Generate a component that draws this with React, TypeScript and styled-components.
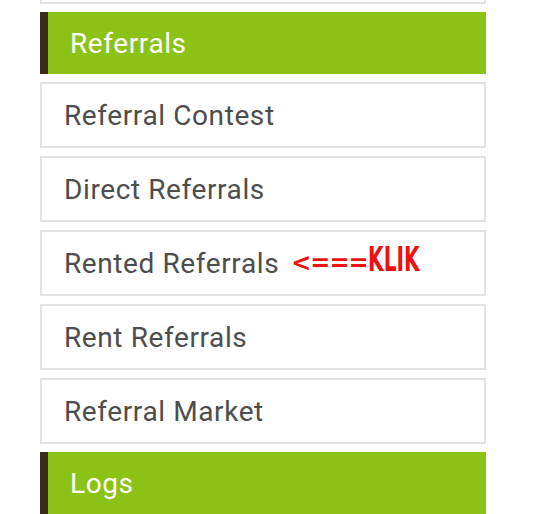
import styled, {createGlobalStyle} from 'styled-components';

const GlobalStyle = createGlobalStyle`
  html, body {
    margin: 0;
    padding: 0;
    background: #ffffff;
    font-family: Roboto, "Noto Sans", sans-serif;
  }
`;

const Menu = styled.nav`
  width: 446px;
  margin: -62px 0 0 40px;
  display: flex;
  flex-direction: column;
  gap: 8px;
`;

const SectionHeader = styled.div`
  height: 62px;
  flex-shrink: 0;
  box-sizing: border-box;
  display: flex;
  align-items: center;
  padding-left: 22px;
  background: #8bc215;
  border-left: 8px solid #3a2a18;
  color: #ffffff;
  font-size: 28px;
  letter-spacing: 0.6px;
`;

const Item = styled.div`
  height: 66px;
  flex-shrink: 0;
  box-sizing: border-box;
  display: flex;
  align-items: center;
  padding-left: 22px;
  border: 2px solid #e3e3e3;
  background: #ffffff;
  color: #4d4d4d;
  font-size: 28px;
  letter-spacing: 0.6px;
`;

const Hint = styled.span`
  display: inline-flex;
  align-items: baseline;
  margin-left: 12px;
  color: #ee1111;
  letter-spacing: 0;
  transform: translateY(-4px);
`;

const Arrow = styled.span`
  font-family: "DejaVu Sans", sans-serif;
  font-size: 24px;
  font-weight: bold;
  letter-spacing: -1px;
`;

const Klik = styled.span`
  display: inline-block;
  font-family: "DejaVu Sans Condensed", "DejaVu Sans", sans-serif;
  font-weight: bold;
  font-size: 34px;
  transform: scaleX(0.66);
  transform-origin: left center;
`;

const items = ['Referral Contest', 'Direct Referrals', 'Rented Referrals', 'Rent Referrals', 'Referral Market'];

const App = () => (
    <>
        <GlobalStyle/>
        <Menu>
            <Item/>
            <SectionHeader>Referrals</SectionHeader>
            {items.map((label) => (
                <Item key={label}>
                    {label}
                    {label === 'Rented Referrals' && (
                        <Hint>
                            <Arrow>{'<==='}</Arrow>
                            <Klik>KLIK</Klik>
                        </Hint>
                    )}
                </Item>
            ))}
            <SectionHeader>Logs</SectionHeader>
        </Menu>
    </>
);

export default App;
